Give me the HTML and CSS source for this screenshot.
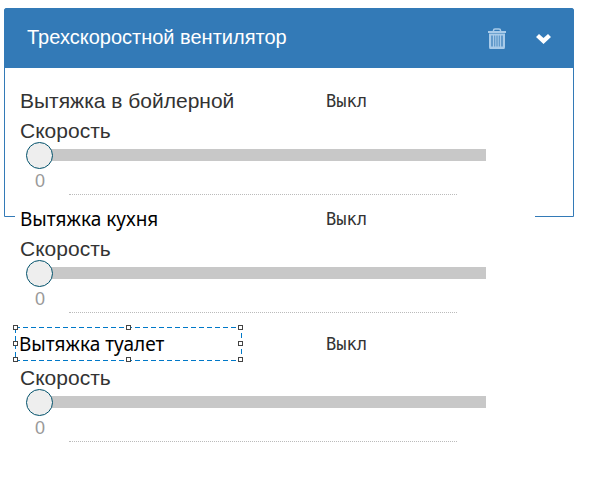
FILE: index.html
```html
<!DOCTYPE html>
<html lang="ru">
<head>
<meta charset="utf-8">
<title>Трехскоростной вентилятор</title>
<link rel="stylesheet" href="styles.css">
</head>
<body>
<main>
  <section class="panel">
    <header class="panel-head">
      <h1>Трехскоростной вентилятор</h1>
      <button class="icon-btn trash" type="button" aria-label="Удалить">
        <svg width="18" height="21" viewBox="0 0 18 21" fill="none" stroke="currentColor">
          <path d="M5.500 3.500V2.500Q5.500 1 7 1H11Q12.500 1 12.500 2.500V3.500" stroke-width="1.500"/>
          <path d="M0 4H18" stroke-width="2"/>
          <path d="M2 6.500H16V19Q16 20.500 14.500 20.500H3.500Q2 20.500 2 19Z" fill="currentColor" fill-opacity=".4" stroke-width="2"/>
          <path d="M5.500 7V19M7.800 7V19M10.200 7V19M12.500 7V19" stroke-width="1"/>
          <path d="M2 19.500H16" stroke-width="2"/>
        </svg>
      </button>
      <button class="icon-btn" type="button" aria-label="Свернуть">
        <svg width="15" height="10" viewBox="0 0 15 10" fill="currentColor">
          <path d="M3 0L7.500 4L12 0L15 3L7.500 10L0 3Z"/>
        </svg>
      </button>
    </header>
    <div class="panel-body">
      <div class="fan">
        <div class="fan-head"><h2>Вытяжка в бойлерной</h2><span class="status">Выкл</span></div>
        <label for="speed1">Скорость</label>
        <input id="speed1" type="range" min="0" max="3" value="0">
        <output for="speed1">0</output>
      </div>
    </div>
  </section>
  <div class="more">
    <div class="fan">
      <div class="fan-head"><h2 class="note">Вытяжка кухня</h2><span class="status">Выкл</span></div>
      <label for="speed2">Скорость</label>
      <input id="speed2" type="range" min="0" max="3" value="0">
      <output for="speed2">0</output>
    </div>
    <div class="fan">
      <div class="fan-head editing">
        <div class="selection">
          <svg class="outline" aria-hidden="true"><rect width="100%" height="100%"/></svg>
          <i class="handle top left"></i><i class="handle top center"></i><i class="handle top right"></i>
          <i class="handle middle left"></i><i class="handle middle right"></i>
          <i class="handle bottom left"></i><i class="handle bottom center"></i><i class="handle bottom right"></i>
          <h2 class="note">Вытяжка туалет</h2>
        </div>
        <span class="status">Выкл</span>
      </div>
      <label for="speed3">Скорость</label>
      <input id="speed3" type="range" min="0" max="3" value="0">
      <output for="speed3">0</output>
    </div>
  </div>
</main>
</body>
</html>
```
FILE: styles.css
```css
* {
  box-sizing: border-box;
}

body {
  margin: 0;
  padding: 8px 16px 8px 4px;
  background: #fff;
  color: #333;
  font-family: "Liberation Sans", Arial, sans-serif;
  font-size: 21px;
}

h1,
h2 {
  margin: 0;
  font-weight: 400;
}

.panel {
  border: 1px solid #337ab7;
  border-radius: 2px 2px 0 0;
}

.panel-head {
  display: flex;
  align-items: center;
  gap: 30px;
  height: 59px;
  padding: 0 22px;
  background: #337ab7;
  color: #fff;
}

.panel-head h1 {
  flex: 1;
  padding-bottom: 4px;
  font-size: 20px;
  line-height: 24px;
}

.icon-btn {
  display: flex;
  padding: 0;
  border: 0;
  background: none;
  color: #fff;
}

.trash {
  color: #a9cbe9;
}

.panel-body {
  padding: 16px 38px 21px 10px;
}

.more {
  position: relative;
  display: grid;
  gap: 14px;
  margin: -15px 39px 0 11px;
  background: #fff;
}

.fan {
  display: flex;
  flex-direction: column;
  padding: 0 5px;
}

.fan-head {
  display: grid;
  grid-template-columns: 3fr 2fr;
  align-items: center;
  height: 33px;
}

.fan-head h2 {
  font-size: 21px;
  line-height: 32px;
}

.fan-head .note {
  color: #000;
  font-family: "Noto Sans", sans-serif;
  font-size: 19px;
  line-height: 34px;
}

.status {
  font-family: "DejaVu Sans Mono", monospace;
  font-size: 17px;
  line-height: 30px;
}

.fan-head.editing {
  margin-bottom: 4px;
}

.selection {
  position: relative;
  width: 226px;
  height: 33px;
  margin-left: -5px;
  padding-left: 4px;
}

.outline {
  position: absolute;
  inset: 0;
  width: 100%;
  height: 100%;
  overflow: visible;
  fill: none;
  stroke: #0078c8;
  stroke-dasharray: 5 3;
  shape-rendering: crispEdges;
}

.handle {
  position: absolute;
  width: 5px;
  height: 5px;
  border: 1px solid #444;
  background: #fff;
}

.top { top: -2px; }
.middle { top: 14px; }
.bottom { bottom: -2px; }
.left { left: -2px; }
.center { left: 111px; }
.right { right: -2px; }

label {
  height: 25px;
  line-height: 28px;
}

input[type="range"] {
  appearance: none;
  height: 27px;
  margin: 0 44px 0 6px;
  background: linear-gradient(#c8c8c8, #c8c8c8) 14px 7px / 100% 12px no-repeat;
}

input[type="range"]::-webkit-slider-thumb {
  appearance: none;
  width: 27px;
  height: 27px;
  border: 1px solid #00506a;
  border-radius: 50%;
  background: #eee;
}

output {
  height: 26px;
  margin: 0 73px 0 49px;
  border-bottom: 1px dotted #bbb;
  color: #999;
  font-size: 18px;
  line-height: 25px;
  text-indent: -34px;
}
```
